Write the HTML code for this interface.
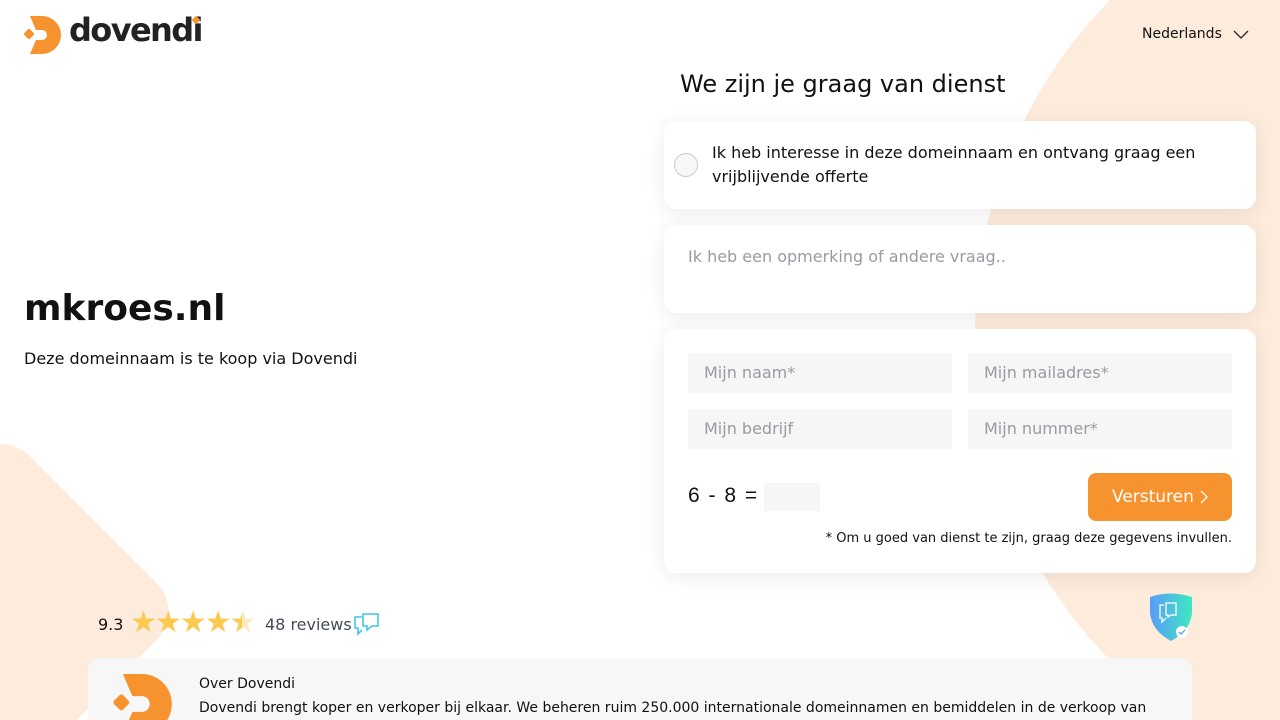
<!DOCTYPE html>
<html><head><meta charset="utf-8"><style>
*{box-sizing:border-box;margin:0;padding:0}
html,body{width:1280px;height:720px;overflow:hidden}
body{position:relative;background:#fff;font-family:"DejaVu Sans","Liberation Sans",sans-serif;color:#111}
.bg1{position:absolute;left:975px;top:-141px;width:942px;height:942px;border-radius:50%;background:#fdecdc}
.bg2{position:absolute;left:-120px;top:485px;width:260px;height:235px;background:#fdecdc;transform:rotate(45deg);border-radius:40px}
.abs{position:absolute}
.card{position:absolute;left:664px;width:592px;background:#fff;border-radius:12px;box-shadow:0 4px 20px rgba(0,0,0,.08)}
.inp{position:absolute;height:40px;width:264px;background:#f6f6f6;color:#9a9aa2;font-size:16px;padding:10px 16px}
</style></head><body>
<div class="bg1"></div><div class="bg2"></div>
<svg class="abs" style="left:24px;top:16px" width="40" height="38" viewBox="0 0 40 38"><path d="M6 0H18A19 19 0 0 1 18 38H6L12 24H18A5 5 0 0 0 18 14H12Z" fill="#f7932f"/><rect x="1" y="14" width="8" height="8" rx="1.5" transform="rotate(45 5 18)" fill="#f7932f"/></svg>
<div class="abs" style="left:69px;top:11px;font-size:32px;font-weight:bold;color:#222;letter-spacing:-1.6px;font-family:'DejaVu Sans',sans-serif">dovendi</div>
<div class="abs" style="left:193px;top:17px;width:6px;height:6px;background:#f7932f;transform:rotate(45deg)"></div>
<div class="abs" style="left:1142px;top:26px;font-size:14px">Nederlands</div>
<svg class="abs" style="left:1233px;top:30px" width="16" height="10"><path d="M1 1l7 7 7-7" stroke="#222" fill="none" stroke-width="1.3"/></svg>
<div class="abs" style="left:24px;top:288px;font-size:36px;font-weight:bold">mkroes.nl</div>
<div class="abs" style="left:24px;top:349px;font-size:16px">Deze domeinnaam is te koop via Dovendi</div>
<div class="abs" style="left:680px;top:70px;font-size:24px">We zijn je graag van dienst</div>
<div class="card" style="top:121px;height:88px">
<div class="abs" style="left:10px;top:32px;width:24px;height:24px;border:1px solid #ccc;border-radius:50%;background:#f7f7f7"></div>
<div class="abs" style="left:48px;top:20px;font-size:16px;line-height:24px;width:520px">Ik heb interesse in deze domeinnaam en ontvang graag een vrijblijvende offerte</div></div>
<div class="card" style="top:225px;height:88px"><div class="abs" style="left:24px;top:22px;font-size:16px;color:#9a9aa2">Ik heb een opmerking of andere vraag..</div></div>
<div class="card" style="top:329px;height:244px">
<div class="inp" style="left:24px;top:24px">Mijn naam*</div><div class="inp" style="left:304px;top:24px">Mijn mailadres*</div>
<div class="inp" style="left:24px;top:80px">Mijn bedrijf</div><div class="inp" style="left:304px;top:80px">Mijn nummer*</div>
<div class="abs" style="left:24px;top:155px;font-size:21px;font-family:'Liberation Sans',sans-serif;word-spacing:3px">6 - 8 =</div>
<div class="abs" style="left:100px;top:154px;width:56px;height:28px;background:#f6f6f6"></div>
<div class="abs" style="left:424px;top:144px;width:144px;height:48px;background:#f7932f;border-radius:8px;color:#fff;font-size:17px;padding:14px 24px">Versturen</div>
<svg class="abs" style="left:536px;top:161px" width="8" height="14"><path d="M1 1l6 6-6 6" stroke="#fff" fill="none" stroke-width="1.3"/></svg>
<div class="abs" style="right:24px;top:202px;font-size:13px">* Om u goed van dienst te zijn, graag deze gegevens invullen.</div></div>
<div class="abs" style="left:98px;top:615px;font-size:16px">9.3</div>
<div class="abs" style="left:130px;top:605px;font-size:30px;color:#fcc951;letter-spacing:-2px">★★★★<span style="background:linear-gradient(90deg,#fcc951 50%,#fdebc0 50%);-webkit-background-clip:text;color:transparent">★</span></div>
<div class="abs" style="left:265px;top:615px;font-size:16px;color:#444a5a">48 reviews</div>
<svg class="abs" style="left:354px;top:613px" width="26" height="24"><path d="M8 4H1V15H4V21L8 17M9 1H24V13H18L13 17V13H9Z" stroke="#3cc9e8" fill="none" stroke-width="1.6"/></svg>
<svg class="abs" style="left:1150px;top:593px" width="44" height="50"><defs><linearGradient id="g" x1="0" x2="1"><stop offset="0" stop-color="#5a9cf7"/><stop offset="1" stop-color="#3ee8c4"/></linearGradient></defs><path d="M0 4Q20-3 42 4V20Q40 38 21 48Q2 38 0 20Z" fill="url(#g)"/><path d="M14 12H10V25H12V29L16 25M16 10H26V22H21L18 24V22H16Z" stroke="#fff" fill="none" stroke-width="1.3"/><circle cx="32" cy="39" r="6" fill="#fff"/><path d="M29 39l2 2 4-4" stroke="#5a9cf7" fill="none" stroke-width="1.3"/></svg>
<div class="abs" style="left:88px;top:658px;width:1104px;height:62px;background:#f7f7f7;border-radius:12px 12px 0 0;overflow:hidden">
<svg class="abs" style="left:24px;top:16px" width="66" height="60" viewBox="0 0 40 38"><path d="M6 0H18A19 19 0 0 1 18 38H6L12 24H18A5 5 0 0 0 18 14H12Z" fill="#f7932f"/><rect x="1" y="14" width="8" height="8" rx="1.5" transform="rotate(45 5 18)" fill="#f7932f"/></svg>
<div class="abs" style="left:111px;top:18px;font-size:14px">Over Dovendi</div>
<div class="abs" style="left:111px;top:42px;font-size:14px;white-space:nowrap">Dovendi brengt koper en verkoper bij elkaar. We beheren ruim 250.000 internationale domeinnamen en bemiddelen in de verkoop van</div></div>
</body></html>
